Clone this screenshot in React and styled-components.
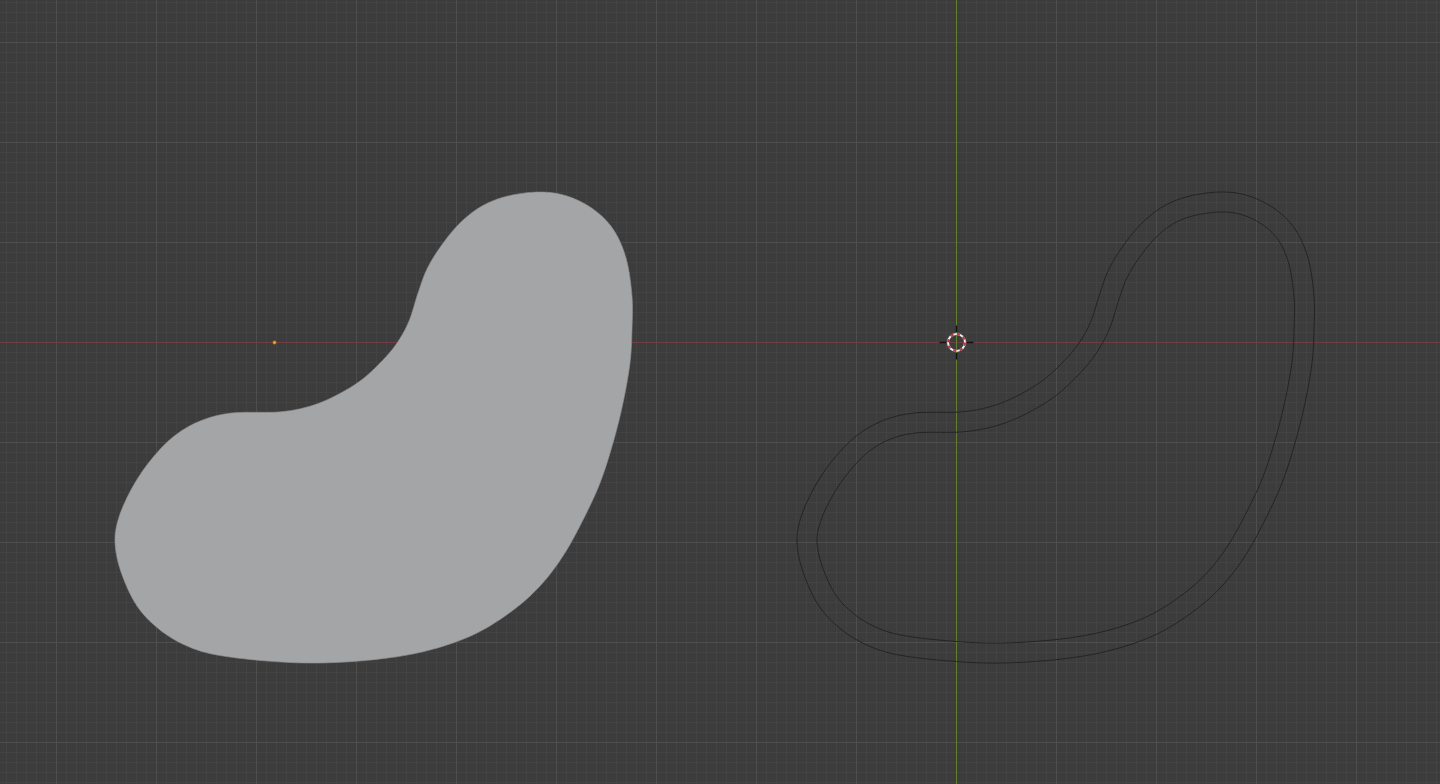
import React from "react";
import styled, { createGlobalStyle } from "styled-components";

const GlobalStyle = createGlobalStyle`
  html, body {
    margin: 0;
    padding: 0;
    background: #3c3c3c;
    font-family: "Noto Sans", sans-serif;
    overflow: hidden;
  }
`;

// world origin on screen
const ORIGIN = { x: 956, y: 342 };

const Viewport = styled.div`
  position: relative;
  width: 1440px;
  height: 784px;
  overflow: hidden;
  background-color: #3c3c3c;
  background-image:
    linear-gradient(to right, #4e4e4e 1px, transparent 1px),
    linear-gradient(to bottom, #4e4e4e 1px, transparent 1px),
    linear-gradient(to right, #434343 1px, transparent 1px),
    linear-gradient(to bottom, #434343 1px, transparent 1px);
  background-size: 100px 100px, 100px 100px, 10px 10px, 10px 10px;
  background-position: ${ORIGIN.x % 100}px 0, 0 ${ORIGIN.y % 100}px,
    ${ORIGIN.x % 10}px 0, 0 ${ORIGIN.y % 10}px;
`;

const Scene = styled.svg`
  position: absolute;
  inset: 0;
  display: block;
`;

const Axis = styled.line`
  stroke: ${(p) => (p.$x ? "#723c46" : "#617f2c")};
  stroke-width: 1;
  shape-rendering: crispEdges;
`;

const FilledCurve = styled.path`
  fill: #a4a5a7;
  stroke: #8e8f91;
  stroke-width: 0.6;
`;

const WireCurve = styled.path`
  fill: none;
  stroke: #232323;
  stroke-width: 1;
`;

const OriginDot = styled.circle`
  fill: #e89a36;
  stroke: #5a3a10;
  stroke-width: 0.5;
`;

// control points of the bean, clockwise from the top
const BEAN = [
  [540, 192], [567, 196], [593, 209], [613, 229], [626, 258], [632, 296],
  [632, 330], [630, 363], [623, 403], [613, 443], [600, 483], [583, 520],
  [563, 556], [540, 586], [512, 611], [475, 634], [430, 650], [380, 659],
  [320, 663], [267, 661], [217, 655], [187, 646], [160, 630], [137, 606],
  [121, 572], [115, 542], [119, 517], [132, 488], [150, 461], [173, 437],
  [200, 421], [232, 413], [278, 412], [307, 407], [333, 397], [360, 381],
  [381, 362], [397, 343], [409, 321], [418, 293], [427, 269], [441, 246],
  [460, 223], [482, 206], [508, 196],
];

const sampleLoop = (pts, steps = 14) => {
  const out = [];
  const n = pts.length;
  for (let i = 0; i < n; i++) {
    const p0 = pts[(i - 1 + n) % n];
    const p1 = pts[i];
    const p2 = pts[(i + 1) % n];
    const p3 = pts[(i + 2) % n];
    for (let s = 0; s < steps; s++) {
      const t = s / steps;
      const t2 = t * t;
      const t3 = t2 * t;
      const c = (k) =>
        0.5 *
        (2 * p1[k] +
          (-p0[k] + p2[k]) * t +
          (2 * p0[k] - 5 * p1[k] + 4 * p2[k] - p3[k]) * t2 +
          (-p0[k] + 3 * p1[k] - 3 * p2[k] + p3[k]) * t3);
      out.push([c(0), c(1)]);
    }
  }
  return out;
};

const offsetLoop = (pts, d) => {
  const n = pts.length;
  return pts.map((p, i) => {
    const a = pts[(i - 1 + n) % n];
    const b = pts[(i + 1) % n];
    let tx = b[0] - a[0];
    let ty = b[1] - a[1];
    const len = Math.hypot(tx, ty) || 1;
    tx /= len;
    ty /= len;
    return [p[0] - ty * d, p[1] + tx * d];
  });
};

const toPath = (pts, dx = 0) =>
  pts
    .map((p, i) => `${i ? "L" : "M"}${(p[0] + dx).toFixed(2)} ${p[1].toFixed(2)}`)
    .join(" ") + " Z";

const bean = sampleLoop(BEAN);
const inner = offsetLoop(bean, 20);
const SHIFT = 682;

const Cursor = ({ x, y }) => {
  const r = 8.5;
  return (
    <g>
      <circle cx={x} cy={y} r={r} fill="none" stroke="#eeeeee" strokeWidth="2" />
      <circle
        cx={x}
        cy={y}
        r={r}
        fill="none"
        stroke="#b83a44"
        strokeWidth="2"
        strokeDasharray="3.34 3.34"
      />
      <g stroke="#121212" strokeWidth="1.4">
        <line x1={x} y1={y - 17} x2={x} y2={y - 10.5} />
        <line x1={x} y1={y + 10.5} x2={x} y2={y + 17} />
        <line x1={x - 17} y1={y} x2={x - 10.5} y2={y} />
        <line x1={x + 10.5} y1={y} x2={x + 17} y2={y} />
      </g>
    </g>
  );
};

export default function App() {
  return (
    <>
      <GlobalStyle />
      <Viewport>
        <Scene width="1440" height="784" viewBox="0 0 1440 784">
          <Axis $x x1="0" y1={ORIGIN.y + 0.5} x2="1440" y2={ORIGIN.y + 0.5} />
          <Axis x1={ORIGIN.x + 0.5} y1="0" x2={ORIGIN.x + 0.5} y2="784" />

          <FilledCurve d={toPath(bean)} />
          <OriginDot cx="274.5" cy={ORIGIN.y + 0.5} r="2" />

          <WireCurve d={toPath(bean, SHIFT)} />
          <WireCurve d={toPath(inner, SHIFT)} />

          <Cursor x={ORIGIN.x + 0.5} y={ORIGIN.y + 0.5} />
        </Scene>
      </Viewport>
    </>
  );
}
